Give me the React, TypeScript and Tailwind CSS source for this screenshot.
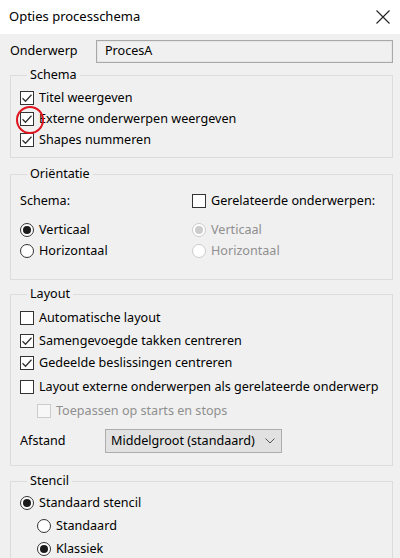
import React from "react";

function Check({ checked, disabled }: { checked?: boolean; disabled?: boolean }) {
  return (
    <span
      className={`flex h-[14px] w-[14px] shrink-0 items-center justify-center border ${
        disabled ? "border-[#cccccc] bg-[#f7f7f7]" : "border-[#333333] bg-white"
      }`}
    >
      {checked && (
        <svg width="12" height="12" viewBox="0 0 12 12">
          <path d="M1.5 6.2 L4.5 9.2 L10.5 2.8" fill="none" stroke="#333333" strokeWidth="1.3" />
        </svg>
      )}
    </span>
  );
}

function Radio({ checked, disabled }: { checked?: boolean; disabled?: boolean }) {
  return (
    <span
      className={`flex h-[14px] w-[14px] shrink-0 items-center justify-center rounded-full border ${
        disabled ? "border-[#cccccc] bg-white" : "border-[#333333] bg-white"
      }`}
    >
      {checked && (
        <span className={`h-[8px] w-[8px] rounded-full ${disabled ? "bg-[#cccccc]" : "bg-[#1a1a1a]"}`} />
      )}
    </span>
  );
}

function Row({
  children,
  label,
  disabled,
  className = "",
}: {
  children: React.ReactNode;
  label: string;
  disabled?: boolean;
  className?: string;
}) {
  return (
    <div className={`flex h-[22px] items-center gap-[5px] whitespace-nowrap ${className}`}>
      {children}
      <span className={disabled ? "text-[#8f8f8f]" : "text-black"}>{label}</span>
    </div>
  );
}

function Group({ title, children, className = "" }: { title: string; children: React.ReactNode; className?: string }) {
  return (
    <fieldset className={`ml-[10px] w-[383px] border border-[#dcdcdc] px-[9px] ${className}`}>
      <legend className="ml-[7px] px-[3px] leading-[16px]">{title}</legend>
      {children}
    </fieldset>
  );
}

export default function App() {
  return (
    <div
      className="h-[558px] w-[400px] overflow-hidden bg-[#f0f0f0] text-[12.6px] text-black"
      style={{ fontFamily: '"Noto Sans", "Open Sans", sans-serif' }}
    >
      {/* Title bar */}
      <div className="flex h-[34px] items-center justify-between bg-white pl-[9px] pr-[9px]">
        <span className="text-[13px]">Opties processchema</span>
        <svg width="16" height="16" viewBox="0 0 16 16">
          <path d="M1.5 1.5 L14.5 14.5 M14.5 1.5 L1.5 14.5" stroke="#222" strokeWidth="1.1" />
        </svg>
      </div>

      {/* Onderwerp */}
      <div className="mt-[6px] flex h-[23px] items-center">
        <span className="w-[96px] pl-[10px]">Onderwerp</span>
        <div className="flex h-[23px] w-[297px] items-center border border-[#a8a8a8] bg-[#f0f0f0] pl-[8px] shadow-[inset_0_0_0_1px_#e6e6e6]">
          ProcesA
        </div>
      </div>

      {/* Schema */}
      <Group title="Schema" className="mt-[4px] pb-[6px]">
        <div className="relative pt-[4px]">
          <Row label="Titel weergeven">
            <Check checked />
          </Row>
          <Row label="Externe onderwerpen weergeven" className="-mt-px">
            <Check checked />
          </Row>
          <Row label="Shapes nummeren" className="-mt-px">
            <Check checked />
          </Row>
          <span className="absolute left-[-4px] top-[23px] h-[28px] w-[28px] rounded-full border-2 border-[#e0141e]" />
        </div>
      </Group>

      {/* Orientatie */}
      <Group title="Oriëntatie" className="mt-[8px] pb-[17px]">
        <div className="grid grid-cols-[172px_1fr] pt-[8px]">
          <div>
            <div className="flex h-[22px] items-center">Schema:</div>
            <Row label="Verticaal" className="mt-[7px]">
              <Radio checked />
            </Row>
            <Row label="Horizontaal" className="-mt-px">
              <Radio />
            </Row>
          </div>
          <div>
            <Row label="Gerelateerde onderwerpen:">
              <Check />
            </Row>
            <Row label="Verticaal" disabled className="mt-[7px]">
              <Radio checked disabled />
            </Row>
            <Row label="Horizontaal" disabled className="-mt-px">
              <Radio disabled />
            </Row>
          </div>
        </div>
      </Group>

      {/* Layout */}
      <Group title="Layout" className="mt-[6px] pb-[12px]">
        <div className="pt-[5px]">
          <Row label="Automatische layout">
            <Check />
          </Row>
          <Row label="Samengevoegde takken centreren" className="mt-[1px]">
            <Check checked />
          </Row>
          <Row label="Gedeelde beslissingen centreren">
            <Check checked />
          </Row>
          <Row label="Layout externe onderwerpen als gerelateerde onderwerp" className="mt-[2px]">
            <Check />
          </Row>
          <Row label="Toepassen op starts en stops" disabled className="mt-[2px] pl-[17px]">
            <Check disabled />
          </Row>
          <div className="mt-[7px] flex h-[24px] items-center">
            <span className="w-[85px]">Afstand</span>
            <div className="flex h-[24px] w-[177px] items-center justify-between border border-[#adadad] bg-[#e1e1e1] pl-[5px] pr-[6px]">
              <span>Middelgroot (standaard)</span>
              <svg width="10" height="6" viewBox="0 0 10 6">
                <path d="M0.5 0.5 L5 5 L9.5 0.5" fill="none" stroke="#555" strokeWidth="1" />
              </svg>
            </div>
          </div>
        </div>
      </Group>

      {/* Stencil */}
      <Group title="Stencil" className="mt-[7px] pb-[10px]">
        <div className="pt-[3px]">
          <Row label="Standaard stencil">
            <Radio checked />
          </Row>
          <Row label="Standaard" className="mt-[1px] pl-[17px]">
            <Radio />
          </Row>
          <Row label="Klassiek" className="mt-[1px] pl-[17px]">
            <Radio checked />
          </Row>
        </div>
      </Group>
    </div>
  );
}
